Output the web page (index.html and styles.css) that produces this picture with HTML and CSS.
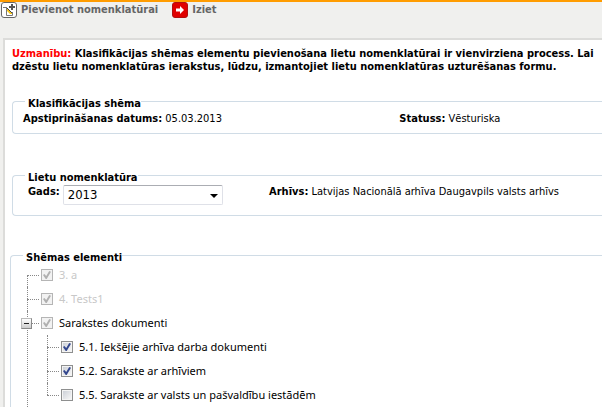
FILE: index.html
```html
<!DOCTYPE html>
<html lang="lv">
<head>
    <meta charset="UTF-8">
    <meta name="viewport" content="width=device-width, initial-scale=1.0">
    <title>Pievienot nomenklatūrai</title>
    <link rel="stylesheet" href="styles.css">
</head>
<body>
    <div class="page">
        <div class="toolbar">
            <button type="button" class="tool">
                <svg width="16" height="16" viewBox="0 0 16 16">
                    <rect x="0.5" y="0.5" width="15" height="15" rx="2.5" fill="#fff" stroke="#666"/>
                    <path d="M2 5.500H6M5.500 5V13.500H11.500V10" fill="none" stroke="#777"/>
                    <path d="M6 6L11 11V12H9L6 9Z" fill="#f5c518"/>
                    <path d="M6 6L11 11" fill="none" stroke="#444"/>
                    <path d="M11 2V8M8 5H14" fill="none" stroke="#555" stroke-width="2"/>
                </svg>
                Pievienot nomenklatūrai
            </button>
            <button type="button" class="tool">
                <svg width="16" height="16" viewBox="0 0 16 16">
                    <rect x="0.5" y="0.5" width="15" height="15" rx="2.5" fill="#e00000" stroke="#b01010"/>
                    <path d="M4 6.500H8V4L12 8L8 12V9.500H4Z" fill="#fff"/>
                </svg>
                Iziet
            </button>
        </div>

        <div class="panel">
            <p class="warning"><span class="attention">Uzmanību:</span> Klasifikācijas shēmas elementu pievienošana lietu nomenklatūrai ir vienvirziena process. Lai dzēstu lietu nomenklatūras ierakstus, lūdzu, izmantojiet lietu nomenklatūras uzturēšanas formu.</p>

            <fieldset class="scheme">
                <legend>Klasifikācijas shēma</legend>
                <div class="fields">
                    <div><b>Apstiprināšanas datums:</b> 05.03.2013</div>
                    <div><b>Statuss:</b> Vēsturiska</div>
                </div>
            </fieldset>

            <fieldset class="nomenclature">
                <legend>Lietu nomenklatūra</legend>
                <div class="fields">
                    <div class="year">
                        <label for="year"><b>Gads:</b></label>
                        <div class="select">
                            <select id="year" name="year">
                                <option value="2013">2013</option>
                            </select>
                        </div>
                    </div>
                    <div><b>Arhīvs:</b> Latvijas Nacionālā arhīva Daugavpils valsts arhīvs</div>
                </div>
            </fieldset>

            <fieldset class="elements">
                <legend>Shēmas elementi</legend>
                <ul class="tree">
                    <li><label class="disabled"><input type="checkbox" checked disabled>3. a</label></li>
                    <li><label class="disabled"><input type="checkbox" checked disabled>4. Tests1</label></li>
                    <li>
                        <button type="button" class="toggle" aria-label="Sakļaut"></button>
                        <label><input type="checkbox" checked disabled>Sarakstes dokumenti</label>
                        <ul>
                            <li><label><input type="checkbox" checked>5.1. Iekšējie arhīva darba dokumenti</label></li>
                            <li><label><input type="checkbox" checked>5.2. Sarakste ar arhīviem</label></li>
                            <li><label><input type="checkbox">5.5. Sarakste ar valsts un pašvaldību iestādēm</label></li>
                        </ul>
                    </li>
                </ul>
            </fieldset>
        </div>
    </div>
</body>
</html>
```

FILE: styles.css
```css
body {
    margin: 0;
    background: #fff;
    color: #000;
    font: 11px/14px "DejaVu Sans Condensed", "Noto Sans", sans-serif;
}
.page {
    background: #f0f0ee;
    border-top: 2px solid #ff9c00;
}
.toolbar {
    display: flex;
    gap: 14px;
    padding: 0 1px 20px;
}
.tool {
    display: flex;
    align-items: center;
    gap: 4px;
    padding: 0;
    border: none;
    background: none;
    color: #666;
    font: bold 11px/16px "DejaVu Sans Condensed", "Noto Sans", sans-serif;
    cursor: pointer;
}
.panel {
    margin-left: 3px;
    padding: 7px 0 0 7px;
    background: #fff;
    border: solid #dcdcda;
    border-width: 2px 0 0 2px;
}
.warning {
    margin: 0 0 19px;
    font-weight: bold;
    line-height: 13px;
}
.attention {
    color: #f00;
}
fieldset {
    min-width: 0;
    margin: 0;
    border: 1px solid #d0dce6;
    border-right: none;
    border-radius: 4px 0 0 4px;
}
legend {
    padding: 5px 0 0 3px;
    font-weight: bold;
}
.fields {
    display: grid;
}
.scheme {
    margin-bottom: 32px;
    padding: 1px 0 7px 12px;
}
.scheme .fields {
    grid-template-columns: 65% 1fr;
    margin-left: -2px;
}
.nomenclature {
    margin-bottom: 30px;
    padding: 0 0 10px 12px;
}
.nomenclature .fields {
    grid-template-columns: 42% 1fr;
    margin-left: 3px;
}
.year {
    display: flex;
    gap: 3px;
}
.select {
    position: relative;
    width: 160px;
}
.select::after {
    content: "";
    position: absolute;
    top: 9px;
    right: 5px;
    border: solid transparent;
    border-width: 4px 4px 0;
    border-top-color: #000;
    pointer-events: none;
}
select {
    display: block;
    appearance: none;
    width: 100%;
    height: 20px;
    padding: 0 4px;
    border: 1px solid #dfe1e8;
    border-top-color: #abadb3;
    border-radius: 2px;
    background: #fff;
    color: #000;
    font: 13px/18px "DejaVu Sans Condensed", "Noto Sans", sans-serif;
}
.elements {
    margin-left: -2px;
    padding: 0 0 0 12px;
    border-bottom: none;
    border-radius: 4px 0 0 0;
}
.tree, .tree ul {
    margin: 0;
    padding: 0;
    list-style: none;
}
.tree {
    margin-top: -2px;
    padding-left: 4px;
    font: 11px/24px "Noto Sans", sans-serif;
}
.tree ul {
    margin-left: 20px;
}
.tree li {
    position: relative;
}
.tree label {
    display: flex;
    align-items: center;
    gap: 6px;
    height: 24px;
    padding-left: 14px;
}
/* dotted guide lines */
.tree li::before {
    content: "";
    position: absolute;
    top: 0;
    bottom: 0;
    left: 0;
    border-left: 1px dotted #888;
}
.tree > li:first-child::before {
    top: 12px;
}
.tree ul li:last-child::before {
    bottom: 12px;
}
.tree label::before {
    content: "";
    position: absolute;
    top: 12px;
    left: 0;
    width: 12px;
    border-top: 1px dotted #888;
}
.toggle {
    position: absolute;
    z-index: 1;
    top: 7px;
    left: -6px;
    width: 11px;
    height: 11px;
    padding: 0;
    border: 1px solid #999;
    border-color: #bbb #888 #888 #bbb;
    background: linear-gradient(#fff, #ccc);
}
.toggle::before {
    content: "";
    display: block;
    width: 5px;
    height: 1px;
    margin: 0 auto;
    background: #222;
}
.disabled {
    color: #c8c8c8;
}
input[type="checkbox"] {
    appearance: none;
    box-sizing: border-box;
    flex: none;
    width: 12px;
    height: 12px;
    margin: 0;
    padding: 1px;
    border: 1px solid #8e8f8f;
    background: linear-gradient(135deg, #cdd1d8, #f6f6f6) content-box, #f4f4f4;
}
input[type="checkbox"]:checked::before {
    content: "";
    display: block;
    width: 8px;
    height: 8px;
    background: #33478e;
    clip-path: polygon(0 50%, 18% 36%, 40% 62%, 78% 0, 100% 8%, 46% 100%, 34% 100%);
}
input[type="checkbox"]:disabled {
    border-color: #b5b5b5;
    background: #f2f2f2;
}
input[type="checkbox"]:disabled::before {
    background: #b0b0b0;
}
```
